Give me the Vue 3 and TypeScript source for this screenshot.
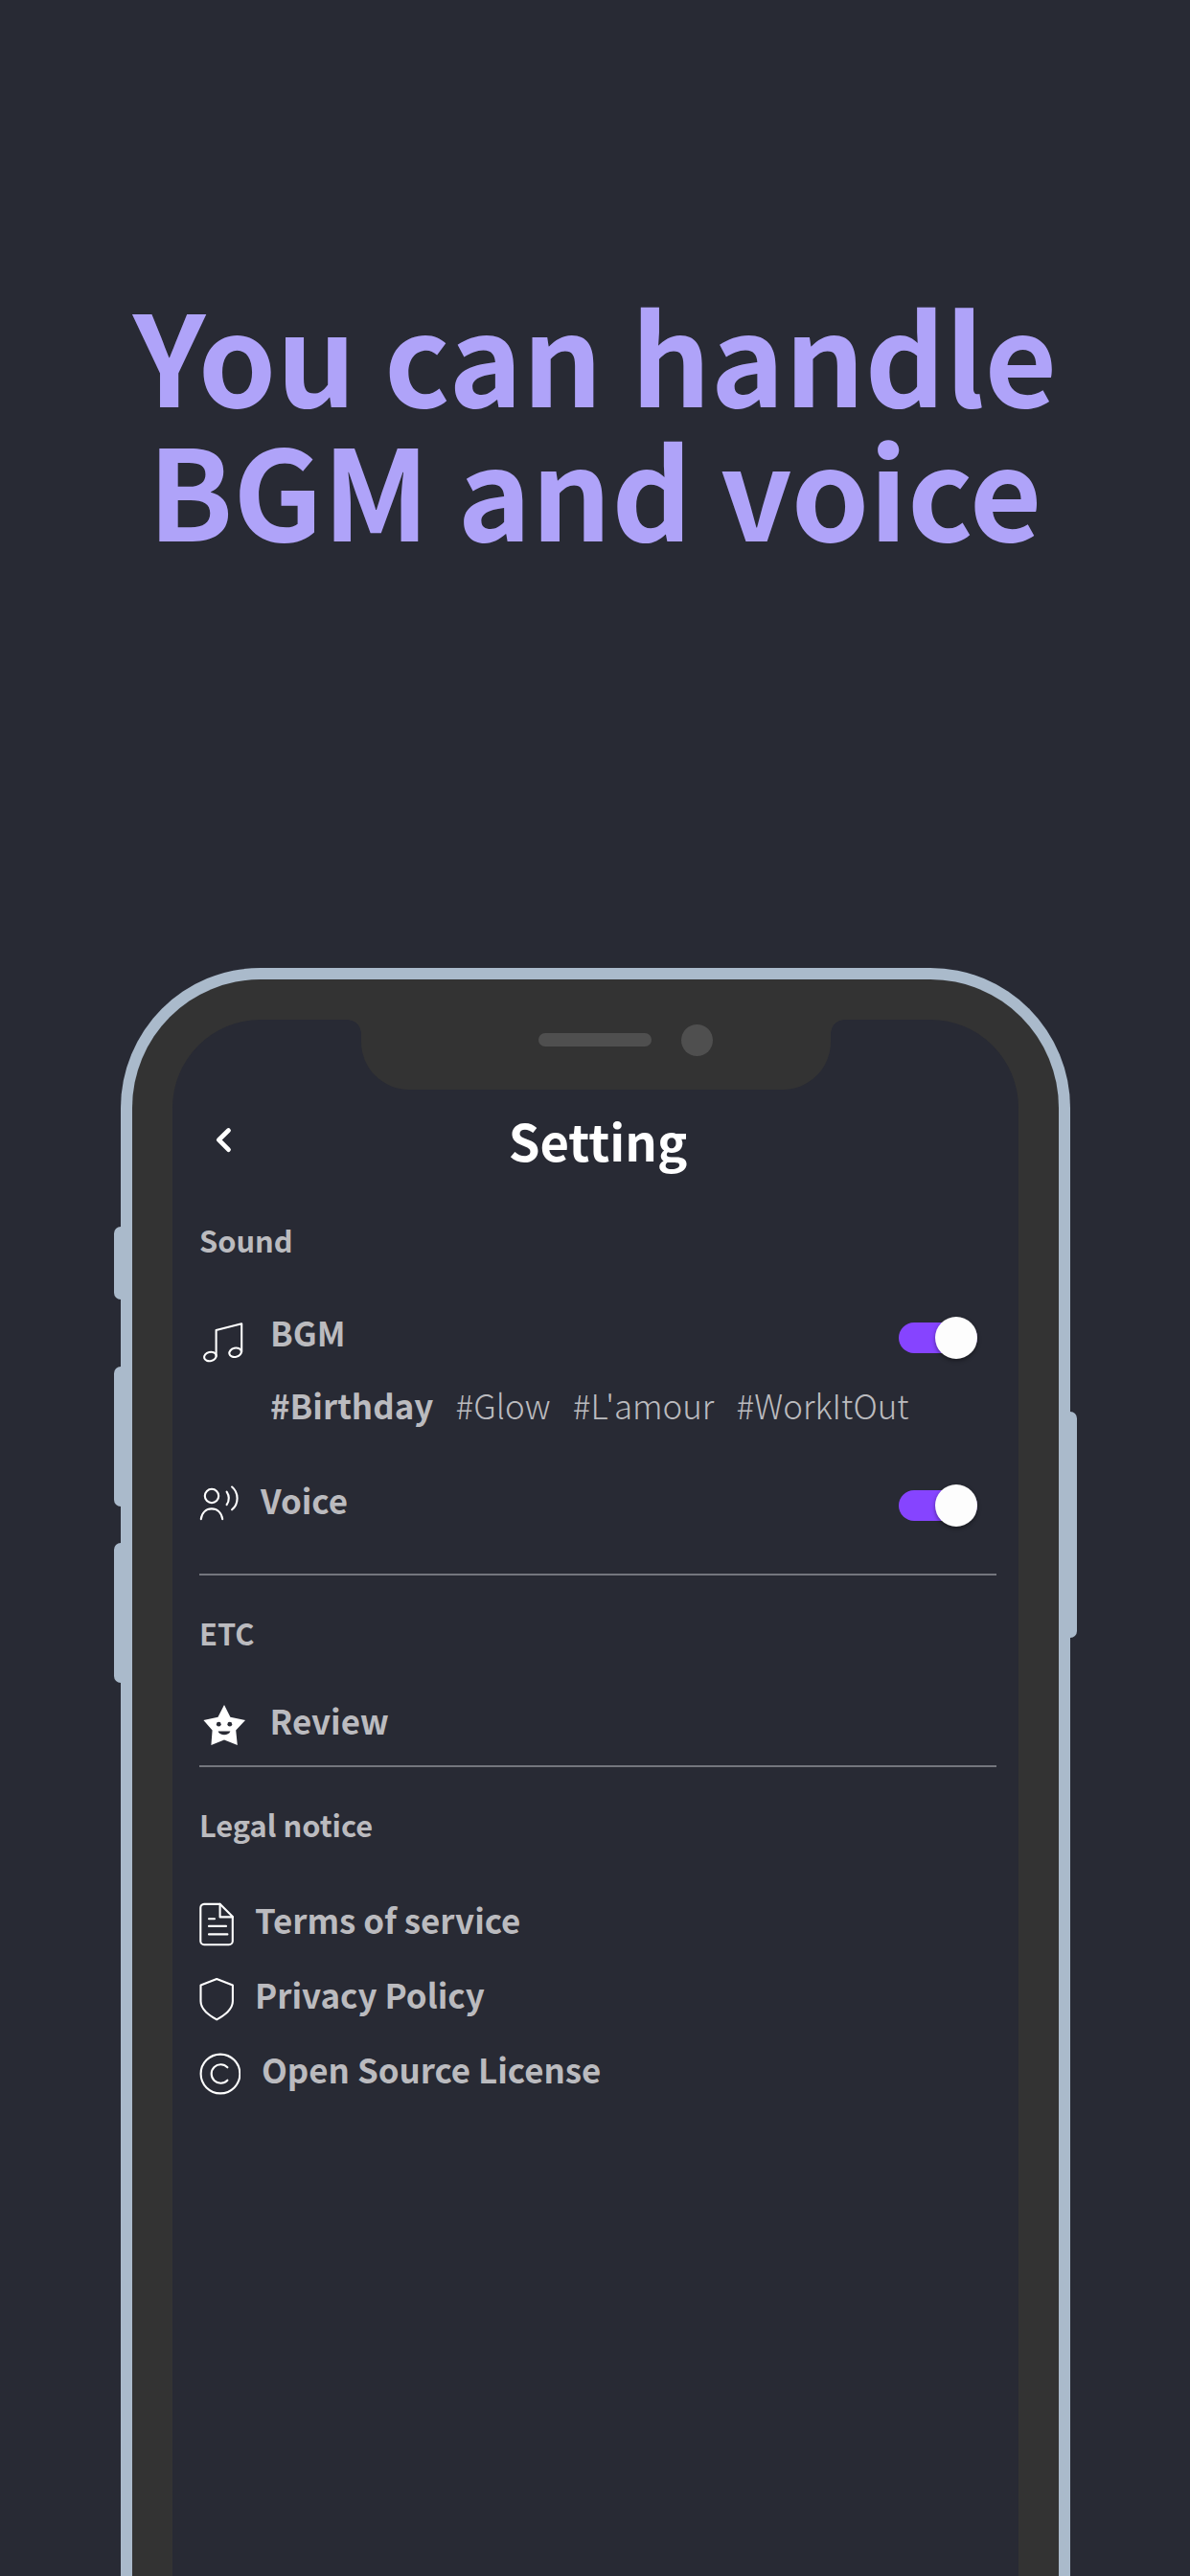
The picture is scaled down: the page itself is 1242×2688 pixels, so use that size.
<script setup lang="ts">
import { ref } from 'vue'

interface Tag {
  label: string
  active: boolean
}

const bgmOn = ref(true)
const voiceOn = ref(true)
const tags = ref<Tag[]>([
  { label: '#Birthday', active: true },
  { label: '#Glow', active: false },
  { label: "#L'amour", active: false },
  { label: '#WorkItOut', active: false },
])
</script>

<template>
  <main class="page">
    <h1 class="headline">You can handle<br />BGM and voice</h1>

    <div class="phone">
      <span class="side-button mute"></span>
      <span class="side-button volume-up"></span>
      <span class="side-button volume-down"></span>
      <span class="side-button power"></span>

      <div class="notch">
        <span class="speaker"></span>
        <span class="camera"></span>
      </div>

      <div class="screen">
        <header class="bar">
          <svg class="back" width="20" height="30" viewBox="0 0 20 30">
            <path d="M15.5 5.6 5.3 15.4 15.5 25.6" fill="none" stroke="#fff" stroke-width="4.8" stroke-linecap="round" stroke-linejoin="round" />
          </svg>
          <h2 class="title">Setting</h2>
        </header>

        <section class="sound">
          <h3 class="label">Sound</h3>
          <div class="row bgm">
            <svg class="icon" width="50" height="60" viewBox="0 0 50 60">
              <ellipse cx="11.4" cy="49.5" rx="6.4" ry="4.6" transform="rotate(-14 11.4 49.5)" />
              <ellipse cx="37.6" cy="45.3" rx="6.4" ry="4.6" transform="rotate(-14 37.6 45.3)" />
              <path d="M17.6 49V22L44.2 15.2V44.5" />
            </svg>
            <span class="text">BGM</span>
            <button class="toggle" :class="{ on: bgmOn }" @click="bgmOn = !bgmOn"><i></i></button>
          </div>
          <div class="tags">
            <span v-for="tag in tags" :key="tag.label" :class="{ active: tag.active }">{{ tag.label }}</span>
          </div>
          <div class="row voice">
            <svg class="icon" width="42" height="62" viewBox="0 0 42 62">
              <circle cx="13" cy="21" r="7.2" />
              <path d="M1.8 45.2C2.7 38.3 7.2 34.4 12.9 34.4S23.2 38.3 24.2 45.2" />
              <path d="M28.6 16.7C31.4 20.9 31.4 26 28.6 30.2" />
              <path d="M34.1 11.5C41.4 17.8 41.4 29 34.1 35.3" />
            </svg>
            <span class="text">Voice</span>
            <button class="toggle" :class="{ on: voiceOn }" @click="voiceOn = !voiceOn"><i></i></button>
          </div>
        </section>

        <section class="etc">
          <h3 class="label">ETC</h3>
          <div class="row review">
            <svg width="50" height="60" viewBox="0 0 50 60">
              <path d="M26 14 32.4 26.8 48 30 38.2 40.6 39.8 56 26 50.6 12.4 56 13.6 40.6 4.4 30 19.5 26.8Z" fill="#fff" />
              <g fill="#282a34">
                <circle cx="20.3" cy="34.2" r="2.4" />
                <circle cx="31.8" cy="34.2" r="2.4" />
                <path d="M19.6 41.5H32.4C30.8 46.6 21.2 46.6 19.6 41.5Z" />
              </g>
            </svg>
            <span class="text">Review</span>
          </div>
        </section>

        <section class="legal">
          <h3 class="label">Legal notice</h3>
          <div class="row">
            <svg class="icon" width="36" height="46" viewBox="0 0 36 46">
              <path d="M5 1.9H21.8L34.8 15V40.4A3.8 3.8 0 0 1 31 44.2H5A3.8 3.8 0 0 1 1.3 40.4V5.7A3.8 3.8 0 0 1 5 1.9Z" />
              <path d="M21.6 1.9V15.4H34.8M10 17.3H16M10 24.9H28M10 33.4H29.4" />
            </svg>
            <span class="text">Terms of service</span>
          </div>
          <div class="row">
            <svg class="icon" width="36" height="46" viewBox="0 0 36 46">
              <path d="M18.2 2 34.9 8.6V25.3C34.9 34 26 39.8 18.2 44.4 10.4 39.8 1.5 34 1.5 25.3V8.6Z" />
            </svg>
            <span class="text">Privacy Policy</span>
          </div>
          <div class="row">
            <svg class="icon" width="43" height="46" viewBox="0 0 43 46">
              <circle cx="22" cy="23" r="20.4" />
              <path d="M29.4 16.3A9.7 9.7 0 1 0 29.4 29.7" />
            </svg>
            <span class="text">Open Source License</span>
          </div>
        </section>
      </div>
    </div>
  </main>
</template>

<style>
body {
  background: #282a34;
}
</style>

<style scoped>
.page {
  box-sizing: border-box;
  width: 1242px;
  height: 2688px;
  padding-top: 299px;
  overflow: hidden;
  background: #282a34;
  font-family: 'Noto Sans CJK KR', 'Noto Sans CJK SC', sans-serif;
  font-weight: 700;
}

h1,
h2,
h3 {
  margin: 0;
  font-weight: 700;
}

.headline {
  height: 280px;
  color: #afa3f9;
  font-size: 130.4px;
  line-height: 140px;
  text-align: center;
}

.phone {
  position: relative;
  box-sizing: border-box;
  width: 991px;
  height: 1800px;
  margin: 431px 0 0 126px;
  padding: 42px 42px 0;
  border: 12px solid #aabacb;
  border-bottom: 0;
  border-radius: 146px 146px 0 0;
  background: #333;
}

.side-button {
  position: absolute;
  left: -19px;
  width: 8px;
  border-radius: 7px 0 0 7px;
  background: #aabacb;
}

.mute {
  top: 258px;
  height: 76px;
}

.volume-up {
  top: 404px;
  height: 146px;
}

.volume-down {
  top: 588px;
  height: 146px;
}

.power {
  top: 451px;
  right: -19px;
  left: auto;
  height: 236px;
  border-radius: 0 7px 7px 0;
}

.notch {
  position: absolute;
  top: 42px;
  left: 238.5px;
  width: 490px;
  height: 73px;
  border-radius: 0 0 50px 50px;
  background: #333;
}

.notch::before,
.notch::after {
  position: absolute;
  top: 0;
  width: 14px;
  height: 14px;
  content: '';
}

.notch::before {
  right: 100%;
  background: radial-gradient(circle at 0 100%, transparent 13.5px, #333 14px);
}

.notch::after {
  left: 100%;
  background: radial-gradient(circle at 100% 100%, transparent 13.5px, #333 14px);
}

.speaker {
  position: absolute;
  top: 14px;
  left: 185px;
  width: 118px;
  height: 14px;
  border-radius: 7px;
  background: #4f4f4f;
}

.camera {
  position: absolute;
  top: 4.5px;
  left: 334px;
  width: 33.5px;
  height: 33.5px;
  border-radius: 50%;
  background: #4f4f4f;
}

.screen {
  box-sizing: border-box;
  height: 1700px;
  padding: 73px 23px 0 28px;
  border-radius: 92px 92px 0 0;
  background: #282a34;
}

.bar {
  display: grid;
  grid-template-columns: 1fr auto 1fr;
  align-items: center;
  height: 103px;
}

.back {
  margin-left: 15px;
}

.title {
  color: #fff;
  font-size: 52.5px;
  line-height: 80px;
}

section {
  color: #bbbbbf;
}

.sound {
  box-sizing: border-box;
  height: 404px;
  padding-top: 30px;
  border-bottom: 2px solid #74767d;
}

.etc {
  box-sizing: border-box;
  height: 200px;
  padding-top: 36px;
  border-bottom: 2px solid #74767d;
}

.legal {
  padding-top: 36px;
}

.label {
  font-size: 30.8px;
  line-height: 48px;
}

.row {
  display: flex;
  align-items: center;
  font-size: 34.9px;
}

.icon {
  fill: none;
  stroke: #fff;
  stroke-width: 2.1;
  stroke-linecap: round;
  stroke-linejoin: round;
}

.text {
  line-height: 48px;
}

.bgm {
  gap: 24px;
  height: 60px;
  margin-top: 48px;
}

.bgm .text {
  padding-bottom: 12px;
}

.tags {
  display: flex;
  gap: 23.3px;
  margin: 16px 0 50px 74px;
  font-size: 34.9px;
  line-height: 48px;
  font-weight: 300;
}

.tags .active {
  font-weight: 700;
}

.voice {
  gap: 22px;
  height: 62px;
}

.voice .text {
  padding-bottom: 12px;
}

.review {
  gap: 23.5px;
  height: 60px;
  margin-top: 37px;
}

.legal .row {
  gap: 22px;
  height: 78.2px;
}

.legal .label + .row {
  margin-top: 41px;
}

.legal .text {
  padding-bottom: 11px;
}

.toggle {
  position: relative;
  width: 82px;
  height: 31.5px;
  margin: 0 20.5px 0 auto;
  padding: 0;
  border: 0;
  border-radius: 16px;
  background: #55565f;
}

.toggle.on {
  background: #8644ff;
}

.toggle i {
  position: absolute;
  top: -6.5px;
  left: 0;
  width: 44px;
  height: 44px;
  border-radius: 50%;
  background: #fdfdfd;
  box-shadow: 0 2px 4px rgba(0, 0, 0, 0.4);
}

.toggle.on i {
  left: 38px;
}
</style>
